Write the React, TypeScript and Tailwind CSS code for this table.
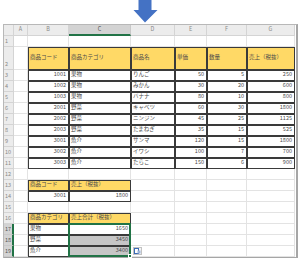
import React from 'react';

type C = { t?: string; r?: boolean; tb?: boolean; y?: boolean; g?: boolean };

const H = (t: string): C => ({ t, tb: true, y: true });
const L = (t: string): C => ({ t, tb: true });
const R = (t: string): C => ({ t, tb: true, r: true });
const E: C = {};

const COLS = ['A', 'B', 'C', 'D', 'E', 'F', 'G'];

const data: [string, string, string, string, string, string][] = [
  ['1001', '果物', 'りんご', '50', '5', '250'],
  ['1002', '果物', 'みかん', '30', '20', '600'],
  ['1003', '果物', 'バナナ', '80', '10', '800'],
  ['2001', '野菜', 'キャベツ', '60', '30', '1800'],
  ['2002', '野菜', 'ニンジン', '45', '25', '1125'],
  ['2003', '野菜', 'たまねぎ', '35', '15', '525'],
  ['3001', '魚介', 'サンマ', '120', '15', '1800'],
  ['3002', '魚介', 'イワシ', '100', '7', '700'],
  ['3003', '魚介', 'たらこ', '150', '6', '900'],
];

const rows: C[][] = [
  [E, E, E, E, E, E, E],
  [E, H('商品コード'), H('商品カテゴリ'), H('商品名'), H('単価'), H('数量'), H('売上（税抜）')],
  ...data.map((d) => [E, R(d[0]), L(d[1]), L(d[2]), R(d[3]), R(d[4]), R(d[5])]),
  [E, E, E, E, E, E, E],
  [E, H('商品コード'), H('売上（税抜）'), E, E, E, E],
  [E, R('3001'), R('1800'), E, E, E, E],
  [E, E, E, E, E, E, E],
  [E, H('商品カテゴリ'), H('売上合計（税抜）'), E, E, E, E],
  [E, L('果物'), R('1650'), E, E, E, E],
  [E, L('野菜'), { ...R('3450'), g: true }, E, E, E, E],
  [E, L('魚介'), { ...R('3400'), g: true }, E, E, E, E],
];

const font = { fontFamily: '"Noto Sans CJK JP", "Noto Sans", sans-serif' };

export default function App() {
  return (
    <div className="w-[300px] h-[258px] bg-white overflow-hidden" style={font}>
      <div className="h-[24px] flex justify-start pl-[133px]">
        <svg width="25" height="23" viewBox="0 0 25 23">
          <path d="M5.5 0 H18.5 V10 H24.5 L12 22.5 L0.5 10 H5.5 Z" fill="#4472c4" />
        </svg>
      </div>
      <div className="ml-[3px] w-[295px] relative border-l border-t border-[#b8b8b8] border-r-2 border-r-[#a6a6a6] border-b-2 border-b-[#a6a6a6]">
        <div className="grid grid-cols-[10px_14px_41px_62px_44px_32px_40px_48px] grid-rows-[11px_11px_23px_repeat(17,11px)] text-[5.5px] leading-none text-[#4a4a4a]">
          <div className="bg-[#ececec] border-r border-b border-[#d4d4d4]" />
          {COLS.map((c) => (
            <div
              key={c}
              className={
                c === 'C'
                  ? 'bg-[#d3d3d3] border-r border-[#c8c8c8] border-b-2 border-b-[#217346] flex items-center justify-center text-[#555]'
                  : 'bg-[#ececec] border-r border-b border-[#d4d4d4] flex items-center justify-center text-[#888]'
              }
            >
              {c}
            </div>
          ))}
          {rows.map((row, i) => {
            const n = i + 1;
            const sel = n >= 17;
            return (
              <React.Fragment key={n}>
                <div
                  className={
                    sel
                      ? 'bg-[#d3d3d3] border-b border-[#c8c8c8] border-r-2 border-r-[#217346] flex items-end pb-[2px] pl-[1px] text-[#555] overflow-hidden'
                      : 'bg-[#ececec] border-r border-b border-[#d4d4d4] flex items-end pb-[2px] pl-[1px] text-[#888] overflow-hidden'
                  }
                >
                  {n}
                </div>
                {row.map((c, j) => {
                  let cls = 'border-r border-b flex items-center overflow-hidden whitespace-nowrap ';
                  if (c.tb) {
                    cls += 'border-[#3a3a3a] shadow-[inset_1px_1px_0_#3a3a3a] ';
                  } else {
                    cls += 'border-[#e3e3e3] ';
                  }
                  if (c.y) cls += 'bg-[#ffd966] pl-[2px] ';
                  else if (c.g) cls += 'bg-[#c6c6c6] ';
                  if (c.r) cls += 'justify-end pr-[2px] ';
                  else if (!c.y) cls += 'pl-[2px] ';
                  return (
                    <div key={j} className={cls}>
                      {c.t}
                    </div>
                  );
                })}
              </React.Fragment>
            );
          })}
        </div>
        {/* selection overlay C17:C19 */}
        <div className="absolute left-[64px] top-[198px] w-[63px] h-[34px] border-2 border-[#217346] pointer-events-none" />
        <div className="absolute left-[124px] top-[229px] w-[4px] h-[4px] bg-[#217346] border border-white" />
        {/* paste options button */}
        <div className="absolute left-[129px] top-[222px] w-[9px] h-[8px] bg-[#f4f4f4] border border-[#c2c2c2] flex items-center justify-center">
          <svg width="7" height="6" viewBox="0 0 7 6">
            <rect x="0.5" y="0.5" width="4" height="5" fill="#fff" stroke="#3b6bb5" strokeWidth="1" />
            <rect x="3.5" y="2.5" width="3" height="3" fill="#9bb3d9" />
          </svg>
        </div>
      </div>
    </div>
  );
}
